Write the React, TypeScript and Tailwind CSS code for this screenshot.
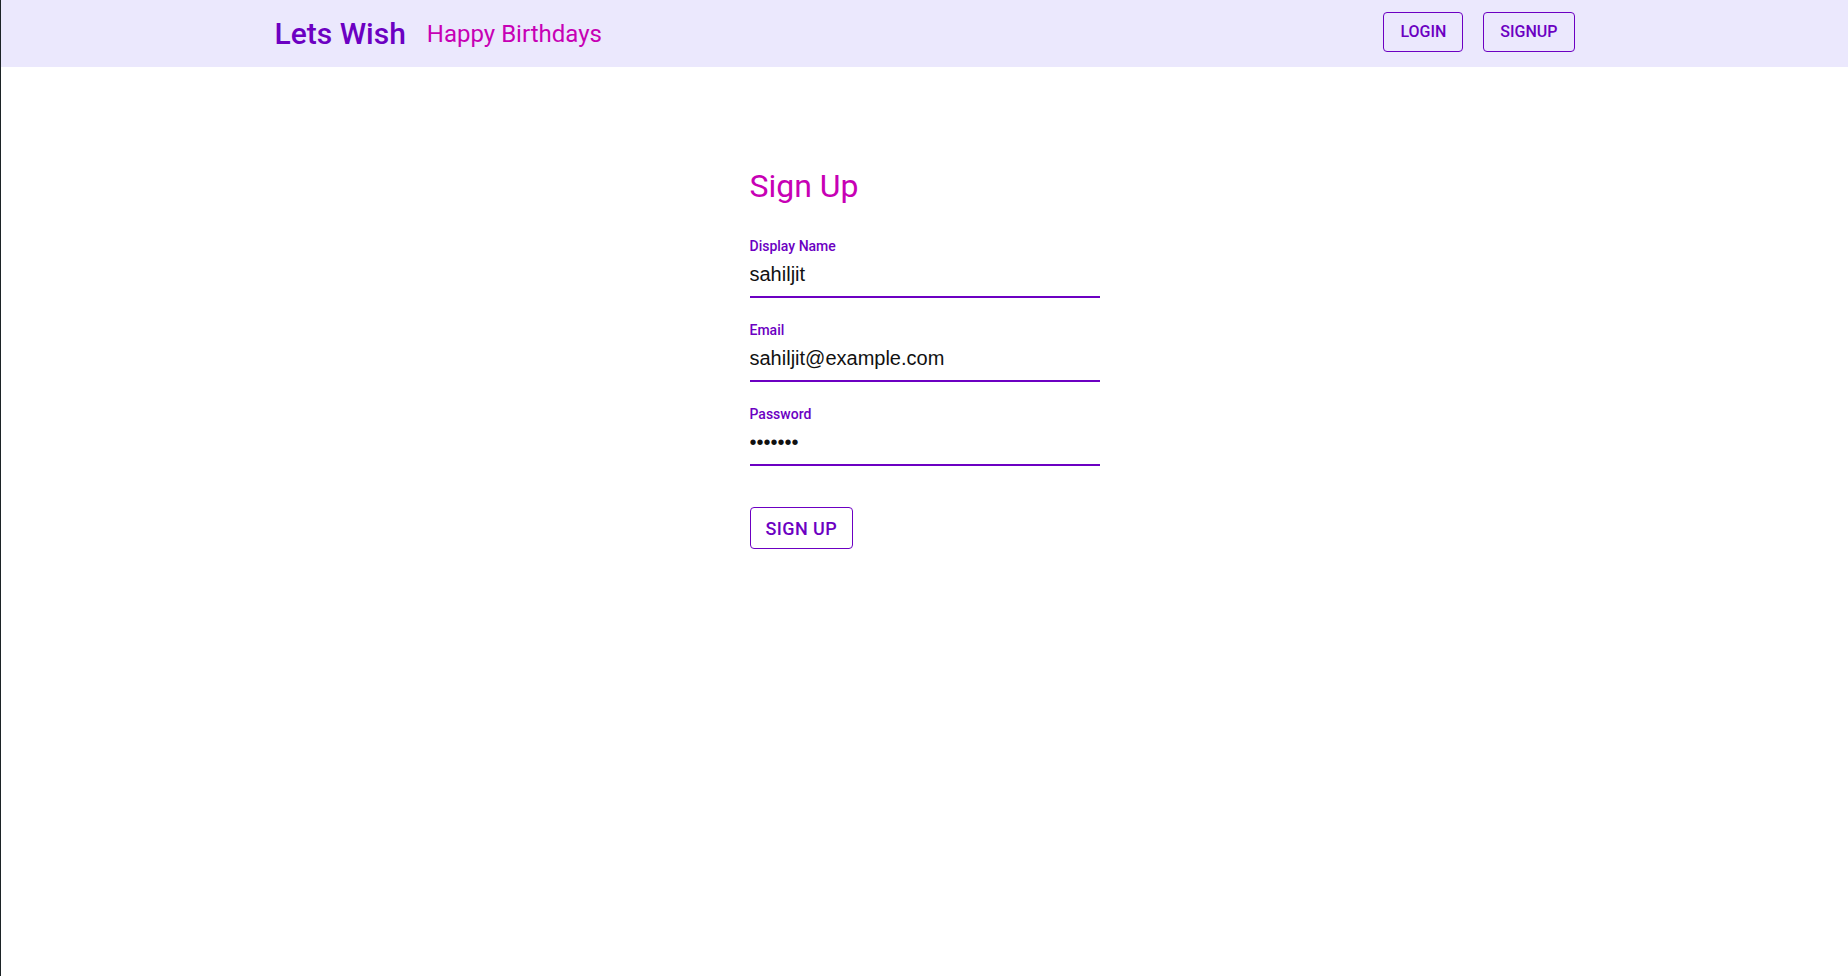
import { useState } from "react";

const roboto = { fontFamily: "Roboto, 'Noto Sans', sans-serif" };

function Field({
  label,
  type = "text",
  value,
  onChange,
}: {
  label: string;
  type?: string;
  value: string;
  onChange: (v: string) => void;
}) {
  return (
    <label className="flex flex-col">
      <span className="text-[14px] leading-[20px] font-medium text-[#6c00c2]">
        {label}
      </span>
      <input
        type={type}
        value={value}
        onChange={(e) => onChange(e.target.value)}
        className="h-[42px] w-full border-b-2 border-[#6c00c2] bg-transparent p-0 pb-[3px] font-['Liberation_Sans',Arial,sans-serif] text-[20px] text-[#111111] outline-none"
      />
    </label>
  );
}

export default function App() {
  const [name, setName] = useState("sahiljit");
  const [email, setEmail] = useState("sahiljit@example.com");
  const [password, setPassword] = useState("sahilji");

  return (
    <div
      className="min-h-screen border-l border-[#1c2326] bg-white"
      style={roboto}
    >
      {/* Header */}
      <header className="h-[67px] bg-[#ebe8fd]">
        <div className="mx-auto flex h-full max-w-[1300px] items-center justify-between">
          <div className="flex items-center gap-[21px]">
            <h1 className="text-[30px] leading-[36px] font-medium text-[#6c00c2]">
              Lets Wish
            </h1>
            <span className="text-[24px] leading-[30px] text-[#c700b5]">
              Happy Birthdays
            </span>
          </div>
          <nav className="mb-[3px] flex items-center gap-5">
            <button className="h-[40px] rounded-[4px] border border-[#6c00c2] px-4 text-[16px] font-medium text-[#6c00c2]">
              LOGIN
            </button>
            <button className="h-[40px] rounded-[4px] border border-[#6c00c2] px-4 text-[16px] font-medium text-[#6c00c2]">
              SIGNUP
            </button>
          </nav>
        </div>
      </header>

      {/* Sign up form */}
      <main className="pt-[100px]">
        <form
          className="mx-auto w-[350px]"
          onSubmit={(e) => e.preventDefault()}
        >
          <h2 className="mb-[31px] text-[32px] leading-[38px] text-[#c700b5]">
            Sign Up
          </h2>
          <div className="flex flex-col gap-[22px]">
            <Field label="Display Name" value={name} onChange={setName} />
            <Field label="Email" value={email} onChange={setEmail} />
            <Field
              label="Password"
              type="password"
              value={password}
              onChange={setPassword}
            />
          </div>
          <button
            type="submit"
            className="mt-[41px] h-[42px] rounded-[4px] border border-[#6c00c2] bg-white px-[15px] text-[18px] font-medium tracking-[0.4px] text-[#6c00c2]"
          >
            SIGN UP
          </button>
        </form>
      </main>
    </div>
  );
}
